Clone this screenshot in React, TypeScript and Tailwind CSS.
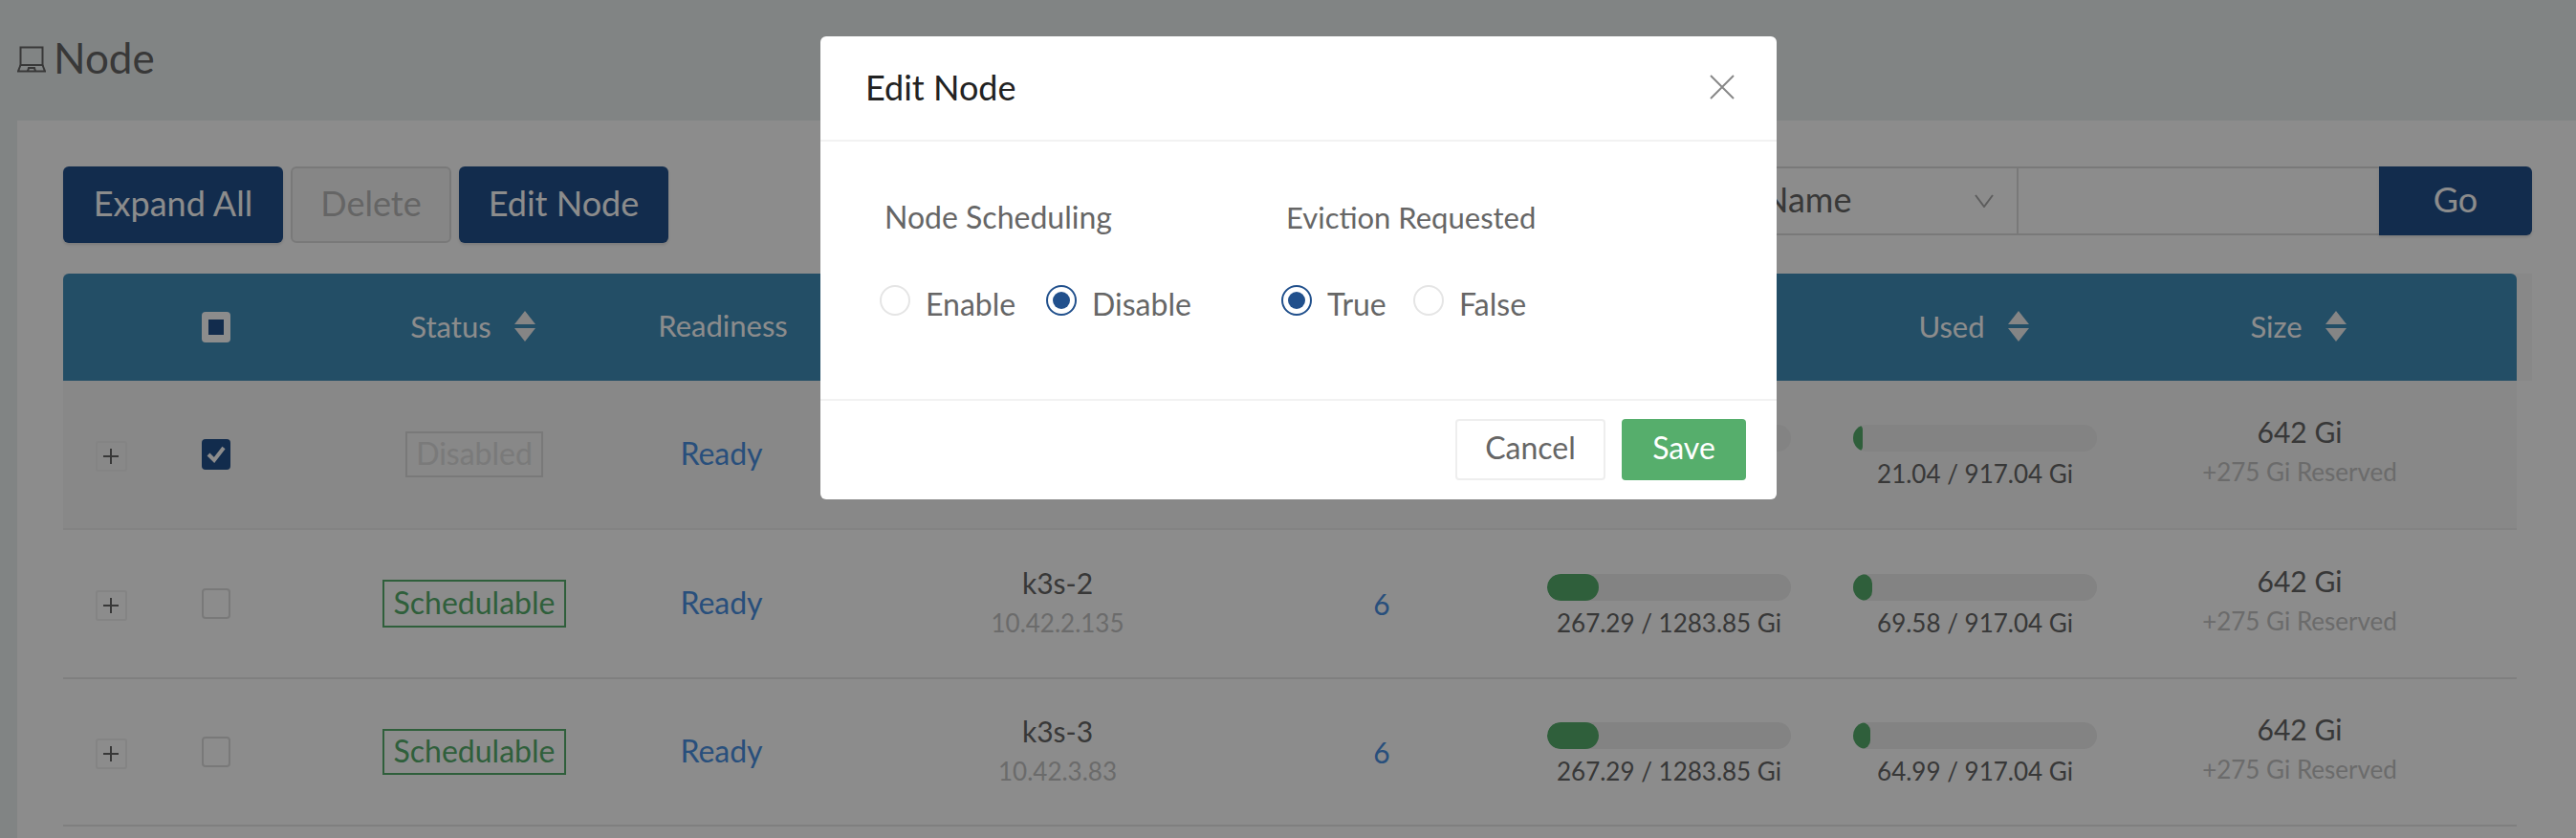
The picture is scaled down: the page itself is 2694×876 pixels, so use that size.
const cols = "grid grid-cols-[100px_120px_320px_300px_400px_278px_323px_317px_362px_46px] items-center";

function Sort() {
  return (
    <svg width="22" height="32" viewBox="0 0 22 32" className="ml-[24px] shrink-0">
      <path d="M11 0 L22 14 H0 Z M0 18 H22 L11 32 Z" fill="#f2f2f2" />
    </svg>
  );
}

function Head({ label, sort }: { label: string; sort?: boolean }) {
  return (
    <div className="flex items-center justify-center pb-[3px] text-[31px] leading-[40px] text-white whitespace-nowrap">
      <span>{label}</span>
      {sort ? <Sort /> : null}
    </div>
  );
}

function Bar({ pct, text }: { pct: number; text: string }) {
  return (
    <div className="flex flex-col items-center">
      <div className="h-[28px] w-[255px] rounded-[14px] bg-[#eeeeee] overflow-hidden">
        <div className="h-full rounded-[14px] bg-[#56ae6c]" style={{ width: `${pct}%` }} />
      </div>
      <div className="mt-[11px] h-[24px] text-[26px] leading-[24px] text-[#666666] whitespace-nowrap">{text}</div>
    </div>
  );
}

type Row = {
  name: string;
  ip: string;
  allocPct: number;
  allocText: string;
  used: number;
  usedText: string;
  height: string;
  tagHeight: string;
  disabled?: boolean;
  pods?: string;
};

const rows: Row[] = [
  { name: "", ip: "", allocPct: 0, allocText: "", used: 4, usedText: "21.04 / 917.04 Gi", height: "h-[156px]", tagHeight: "h-[48px]", disabled: true },
  { name: "k3s-2", ip: "10.42.2.135", allocPct: 21, allocText: "267.29 / 1283.85 Gi", used: 8, usedText: "69.58 / 917.04 Gi", height: "h-[156px]", tagHeight: "h-[50px]", pods: "6" },
  { name: "k3s-3", ip: "10.42.3.83", allocPct: 21, allocText: "267.29 / 1283.85 Gi", used: 7, usedText: "64.99 / 917.04 Gi", height: "h-[154px]", tagHeight: "h-[48px]", pods: "6" },
];

function NodeRow({ row }: { row: Row }) {
  return (
    <div
      className={`${cols} ${row.height} border-b-2 ${
        row.disabled ? "bg-[#f7f7f7] border-[#efefef]" : "border-[#e8e8e8]"
      }`}
    >
      <div className="flex justify-center pt-[3px]">
        <div className="flex h-[32px] w-[33px] items-center justify-center rounded-[3px] border-2 border-[#f0f0f0]">
          <svg width="16" height="16" viewBox="0 0 16 16">
            <path d="M8 0 V16 M0 8 H16" stroke="#666666" strokeWidth="2" />
          </svg>
        </div>
      </div>
      <div className="flex justify-center">
        {row.disabled ? (
          <div className="flex h-[32px] w-[30px] items-center justify-center rounded-[4px] bg-[#21508c]">
            <svg width="20" height="18" viewBox="0 0 20 18" fill="none" stroke="#ffffff" strokeWidth="4">
              <path d="M2 9 L8 15 L18 2" />
            </svg>
          </div>
        ) : (
          <div className="h-[32px] w-[30px] rounded-[4px] border-2 border-[#dddddd] bg-white" />
        )}
      </div>
      <div className="flex justify-center pl-[100px]">
        {row.disabled ? (
          <div className={`flex ${row.tagHeight} w-[144px] items-center justify-center border-2 border-[#dddddd] pb-[2px] text-[32px] text-[#dedede]`}>
            Disabled
          </div>
        ) : (
          <div className={`flex ${row.tagHeight} w-[192px] items-center justify-center border-2 border-[#56ae6c] pb-[2px] text-[32px] text-[#56ae6c]`}>
            Schedulable
          </div>
        )}
      </div>
      <div className="pb-[2px] pr-[3px] text-center text-[32px] text-[#4a90e2]">Ready</div>
      <div className="pb-[2px] text-center">
        <div className="text-[30px] leading-[42px] text-[#666666]">{row.name}</div>
        <div className="text-[26px] leading-[42px] text-[#c4c4c4]">{row.ip}</div>
      </div>
      <div className="text-center text-[30px] text-[#4a90e2]">{row.pods}</div>
      <div className="flex justify-center">
        <Bar pct={row.allocPct} text={row.allocText} />
      </div>
      <div className="flex justify-center">
        <Bar pct={row.used} text={row.usedText} />
      </div>
      <div className="pb-[6px] text-center">
        <div className="text-[30px] leading-[42px] text-[#666666]">642 Gi</div>
        <div className="text-[26px] leading-[42px] text-[#c4c4c4]">+275 Gi Reserved</div>
      </div>
      <div />
    </div>
  );
}

function Radio({ label, on, className }: { label: string; on?: boolean; className?: string }) {
  return (
    <div className={`flex items-center ${className ?? ""}`}>
      <div
        className={`flex h-[32px] w-[32px] items-center justify-center rounded-full border-2 ${
          on ? "border-[#21508c]" : "border-[#e5e5e5]"
        }`}
      >
        {on ? <div className="h-[18px] w-[18px] rounded-full bg-[#21508c]" /> : null}
      </div>
      <span className="ml-[16px] pt-[8px] text-[32px] leading-[40px] text-[#666666]">{label}</span>
    </div>
  );
}

export default function App() {
  return (
    <div
      className="relative h-[876px] w-[2694px] overflow-hidden bg-[#ecf0f0]"
      style={{ fontFamily: "Lato, 'Open Sans', sans-serif" }}
    >
      <header className="flex h-[126px] items-center pb-[6px] pl-[18px]">
        <svg width="30" height="28" viewBox="0 0 30 28" fill="none" stroke="#666666" strokeWidth="2" className="mt-[4px]">
          <path d="M3.5 1.5 H26.5 V20 H3.5 Z" />
          <path d="M3.5 20 L1 26.5 H29 L26.5 20" />
          <path d="M11 26.5 L12 23 H18 L19 26.5" />
        </svg>
        <h1 className="ml-[8px] text-[44px] font-normal leading-none text-[#666666]">Node</h1>
      </header>

      <main className="ml-[18px] h-[750px] bg-white pl-[48px] pr-[46px] pt-[48px]">
        <div className="flex items-start justify-between">
          <div className="flex gap-[8px]">
            <button className="h-[80px] w-[230px] rounded-[6px] bg-[#21508c] pb-[4px] text-[36px] text-white shadow-[0_2px_3px_rgba(0,0,0,0.12)]">
              Expand All
            </button>
            <button className="h-[80px] w-[168px] rounded-[6px] border-2 border-[#dddddd] bg-[#f5f5f5] pb-[4px] text-[36px] text-[#b8b8b8]">
              Delete
            </button>
            <button className="h-[80px] w-[219px] rounded-[6px] bg-[#21508c] pb-[4px] text-[36px] text-white shadow-[0_2px_3px_rgba(0,0,0,0.12)]">
              Edit Node
            </button>
          </div>
          <div className="flex h-[72px]">
            <div className="flex w-[301px] items-center justify-between border-y-2 border-r-2 border-[#dddddd] pb-[4px] pl-[33px] pr-[24px] text-[36px] text-[#666666]">
              <span>Name</span>
              <svg width="20" height="14" viewBox="0 0 20 14" fill="none" stroke="#aaaaaa" strokeWidth="2" className="mt-[4px]">
                <path d="M1 1 L10 13 L19 1" />
              </svg>
            </div>
            <div className="w-[377px] border-y-2 border-[#dddddd]" />
            <button className="w-[160px] rounded-r-[6px] bg-[#21508c] pb-[4px] text-[36px] text-white shadow-[0_2px_3px_rgba(0,0,0,0.12)]">
              Go
            </button>
          </div>
        </div>

        <div className="mt-[32px] w-[2582px]">
          <div className="bg-[#f7f7f7] pr-[16px]">
            <div className={`${cols} h-[112px] rounded-t-[6px] bg-[#418ebb]`}>
              <div />
              <div className="flex justify-center">
                <div className="flex h-[32px] w-[30px] items-center justify-center rounded-[4px] bg-white">
                  <div className="h-[16px] w-[16px] bg-[#21508c]" />
                </div>
              </div>
              <div className="pl-[97px]">
                <Head label="Status" sort />
              </div>
              <div className="pb-[2px]">
                <Head label="Readiness" />
              </div>
              <div />
              <div />
              <div />
              <div className="pr-[3px]">
                <Head label="Used" sort />
              </div>
              <div className="pr-[3px]">
                <Head label="Size" sort />
              </div>
              <div />
            </div>
          </div>
          <div className="w-[2566px]">
            {rows.map((row) => (
              <NodeRow key={row.usedText} row={row} />
            ))}
          </div>
        </div>
      </main>

      <div className="absolute inset-0 bg-black/45" />

      <section className="absolute left-[858px] top-[38px] flex h-[484px] w-[1000px] flex-col rounded-[6px] bg-white">
        <div className="flex h-[110px] items-center justify-between border-b-2 border-[#f2f2f2] pb-[2px] pl-[47px] pr-[44px]">
          <h2 className="text-[36px] font-normal text-[#222222]">Edit Node</h2>
          <svg width="26" height="26" viewBox="0 0 26 26" fill="none" stroke="#888888" strokeWidth="2">
            <path d="M1 1 L25 25 M25 1 L1 25" />
          </svg>
        </div>
        <div className="flex flex-1 pl-[62px] pt-[61px]">
          <div className="w-[420px]">
            <div className="ml-[5px] text-[32px] leading-[36px] text-[#666666]">Node Scheduling</div>
            <div className="mt-[45px] flex">
              <Radio label="Enable" className="w-[174px]" />
              <Radio label="Disable" on />
            </div>
          </div>
          <div>
            <div className="ml-[5px] text-[31px] leading-[36px] text-[#666666]">Eviction Requested</div>
            <div className="mt-[45px] flex">
              <Radio label="True" on className="w-[138px]" />
              <Radio label="False" />
            </div>
          </div>
        </div>
        <div className="flex h-[105px] items-start justify-end gap-[17px] border-t-2 border-[#f2f2f2] pr-[32px] pt-[19px]">
          <button className="h-[64px] w-[157px] rounded-[4px] border-2 border-[#eeeeee] bg-white pb-[4px] text-[32px] text-[#666666]">
            Cancel
          </button>
          <button className="h-[64px] w-[130px] rounded-[4px] bg-[#56ae6c] pb-[4px] text-[32px] text-white">Save</button>
        </div>
      </section>
    </div>
  );
}
